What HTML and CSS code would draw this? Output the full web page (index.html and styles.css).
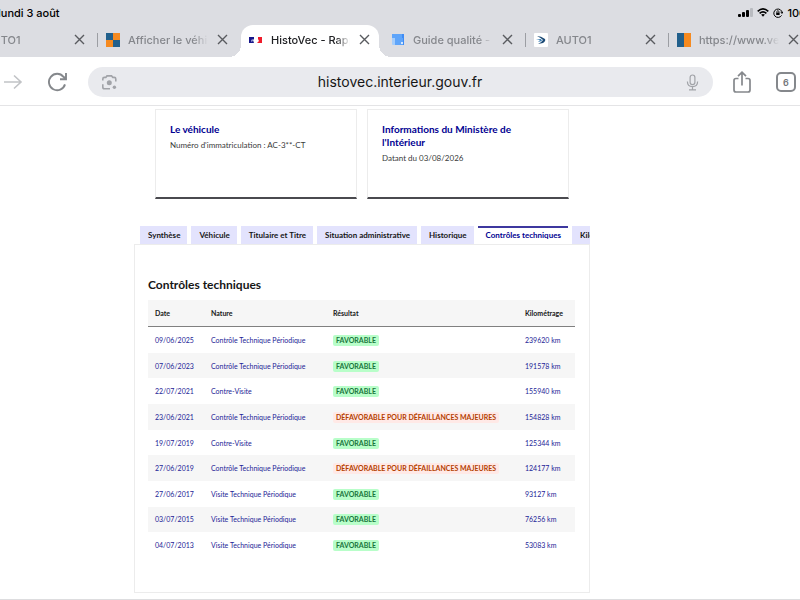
FILE: index.html
```html
<!DOCTYPE html>
<html lang="fr">
  <head>
    <meta charset="UTF-8">
    <title>HistoVec - Rapport</title>
    <link rel="stylesheet" href="styles.css">
  </head>
  <body>
    <div class="browser">
      <div class="status-bar">
        <span class="status-date">lundi 3 août</span>
        <div class="status-icons">
          <svg width="15" height="10" viewBox="0 0 15 10">
            <rect x="0" y="6" width="3" height="3" rx="1"/>
            <rect x="4" y="4" width="3" height="5" rx="1"/>
            <rect x="8" y="2" width="3" height="7" rx="1"/>
            <rect x="12" y="0" width="3" height="9" rx="1" fill="#b9bbc0"/>
          </svg>
          <svg width="12" height="9" viewBox="0 0 12 9" fill="none" stroke="#000" stroke-width="1.7">
            <path d="M.7 3.3Q6-1.4 11.3 3.3M2.6 5.3Q6 2.4 9.4 5.3"/>
            <path d="M4.1 6.6Q6 5.2 7.9 6.6L6 8.7Z" fill="#000" stroke="none"/>
          </svg>
          <svg width="10" height="10" viewBox="0 0 10 10" fill="none" stroke="#000">
            <path d="M8.6 7.4A4.2 4.2 0 1 1 9.2 5M7.6 4.2L9.2 5.4L9.9 3.8"/>
            <rect x="3.2" y="4.6" width="3.4" height="2.4" fill="#000" stroke="none"/>
            <path d="M3.9 4.8V3.7A1 1 0 0 1 5.9 3.7V4.8" stroke-width=".8"/>
          </svg>
          <span class="battery">100 %</span>
        </div>
      </div>

      <div class="tab-strip">
        <div class="browser-tab">
          <span class="favicon"></span>
          <span class="tab-title">AUTO1</span>
          <button class="tab-close" aria-label="Fermer"><svg width="11" height="11" viewBox="0 0 11 11"><path d="M1 1L10 10M10 1L1 10"/></svg></button>
        </div>
        <div class="browser-tab divided">
          <svg class="favicon" viewBox="0 0 14 14"><path fill="#22608c" d="M0 0H7V14H14V7H0Z"/><path fill="#f58a20" d="M7 0H14V7H7V14H0V7H7Z"/></svg>
          <span class="tab-title">Afficher le véhicule</span>
          <button class="tab-close" aria-label="Fermer"><svg width="11" height="11" viewBox="0 0 11 11"><path d="M1 1L10 10M10 1L1 10"/></svg></button>
        </div>
        <div class="browser-tab current">
          <svg class="favicon" viewBox="0 0 14 14"><path fill="#17178b" d="M0 4H5V6L4 7L5 10H0Z"/><path fill="#8d90cc" d="M2 7L4 6V8L2 9Z"/><path fill="#ef1c2b" d="M9 4H13V10H8L10 8L9 6Z"/></svg>
          <span class="tab-title">HistoVec - Rapport</span>
          <button class="tab-close" aria-label="Fermer"><svg width="11" height="11" viewBox="0 0 11 11"><path d="M1 1L10 10M10 1L1 10"/></svg></button>
        </div>
        <div class="browser-tab">
          <svg class="favicon" viewBox="0 0 14 14"><path fill="#3f8cf5" d="M1 1H13V12H4V5H1Z"/><path fill="#5fa5fa" d="M1 1H11V5H1ZM4 5H12V12H4Z"/><path fill="#a5cdfb" d="M1 5H4V12H2Q1 12 1 11Z"/><circle cx="11" cy="10" r="1" fill="#fff"/></svg>
          <span class="tab-title">Guide qualité - AUTO1</span>
          <button class="tab-close" aria-label="Fermer"><svg width="11" height="11" viewBox="0 0 11 11"><path d="M1 1L10 10M10 1L1 10"/></svg></button>
        </div>
        <div class="browser-tab divided">
          <svg class="favicon" viewBox="0 0 14 14"><rect width="14" height="14" rx="1" fill="#fff"/><path fill="#1c4a75" d="M3 3Q7 3 11 6Q12 8 9 10L4 11Q8 9 9 7Q7 5 3 3Z"/><path fill="#3b7fb5" d="M2 6L7 6L8 8L4 9L6 7Z"/></svg>
          <span class="tab-title">AUTO1</span>
          <button class="tab-close" aria-label="Fermer"><svg width="11" height="11" viewBox="0 0 11 11"><path d="M1 1L10 10M10 1L1 10"/></svg></button>
        </div>
        <div class="browser-tab divided">
          <svg class="favicon" viewBox="0 0 14 14"><path fill="#22608c" d="M0 0H7V14H0Z"/><path fill="#f58a20" d="M7 0H14V14H7Z"/></svg>
          <span class="tab-title">https://www.vehicule</span>
          <button class="tab-close" aria-label="Fermer"><svg width="11" height="11" viewBox="0 0 11 11"><path d="M1 1L10 10M10 1L1 10"/></svg></button>
        </div>
      </div>

      <div class="toolbar">
        <button class="tool" aria-label="Suivant">
          <svg width="20" height="16" viewBox="0 0 20 16" fill="none" stroke="#c1c3c6" stroke-width="1.6"><path d="M1 8H18M11 1.5L18 8L11 14.5"/></svg>
        </button>
        <button class="tool" aria-label="Actualiser">
          <svg width="20" height="20" viewBox="0 0 20 20" fill="none" stroke="#85888c" stroke-width="1.9"><path d="M17 12.4A8.2 8.2 0 1 1 15.5 4.8L18 7M18 1V7.2H12"/></svg>
        </button>
        <div class="omnibox">
          <svg width="17" height="17" viewBox="0 0 17 17" fill="none" stroke="#a1a3a8" stroke-width="1.6"><path d="M1.8 6.6V5Q1.8 3.4 3.4 3.4H4.8L6 1.9H10.6L11.8 3.4H13.2Q14.8 3.4 14.8 5V7.5M1.8 10.2V13Q1.8 14.8 3.4 14.8H9"/><circle cx="8.3" cy="8.8" r="2.5" fill="#a1a3a8" stroke="none"/><circle cx="13.4" cy="13.2" r="1.7" fill="#a1a3a8" stroke="none"/></svg>
          <input class="address" type="text" aria-label="Adresse" value="histovec.interieur.gouv.fr">
          <svg width="13" height="17" viewBox="0 0 13 17" fill="none" stroke="#a1a3a8" stroke-width="1.2"><rect x="4.1" y="1" width="4.8" height="9.6" rx="2.4"/><path d="M1.4 7.5Q1.4 12.6 6.5 12.6T11.6 7.5M6.5 12.6V15.8M3 15.8H10"/></svg>
        </div>
        <button class="tool" aria-label="Partager">
          <svg width="18" height="22" viewBox="0 0 18 22" fill="none" stroke="#85888c" stroke-width="1.7"><path d="M5.5 7.5H3Q1 7.5 1 9.5V19Q1 21 3 21H15Q17 21 17 19V9.5Q17 7.5 15 7.5H12.5M9 14.5V1.5M5 5.2L9 1.3L13 5.2"/></svg>
        </button>
        <button class="tool tab-count">6</button>
      </div>
    </div>

    <main class="page">
      <div class="cards">
        <div class="card">
          <h3>Le véhicule</h3>
          <p>Numéro d'immatriculation : AC-3**-CT</p>
        </div>
        <div class="card">
          <h3>Informations du Ministère de l'Intérieur</h3>
          <p>Datant du 03/08/2026</p>
        </div>
      </div>

      <div class="report-tabs" role="tablist">
        <button class="report-tab" role="tab">Synthèse</button>
        <button class="report-tab" role="tab">Véhicule</button>
        <button class="report-tab" role="tab">Titulaire et Titre</button>
        <button class="report-tab" role="tab">Situation administrative</button>
        <button class="report-tab" role="tab">Historique</button>
        <button class="report-tab selected" role="tab" aria-selected="true">Contrôles techniques</button>
        <button class="report-tab" role="tab">Kilométrage</button>
      </div>

      <section class="panel" role="tabpanel">
        <h2>Contrôles techniques</h2>
        <table class="controls">
          <thead>
            <tr>
              <th class="col-date">Date</th>
              <th class="col-nature">Nature</th>
              <th class="col-result">Résultat</th>
              <th>Kilométrage</th>
            </tr>
          </thead>
          <tbody>
            <tr><td>09/06/2025</td><td>Contrôle Technique Périodique</td><td><span class="badge success">Favorable</span></td><td>239620 km</td></tr>
            <tr><td>07/06/2023</td><td>Contrôle Technique Périodique</td><td><span class="badge success">Favorable</span></td><td>191578 km</td></tr>
            <tr><td>22/07/2021</td><td>Contre-Visite</td><td><span class="badge success">Favorable</span></td><td>155940 km</td></tr>
            <tr><td>23/06/2021</td><td>Contrôle Technique Périodique</td><td><span class="badge warning">Défavorable pour défaillances majeures</span></td><td>154828 km</td></tr>
            <tr><td>19/07/2019</td><td>Contre-Visite</td><td><span class="badge success">Favorable</span></td><td>125344 km</td></tr>
            <tr><td>27/06/2019</td><td>Contrôle Technique Périodique</td><td><span class="badge warning">Défavorable pour défaillances majeures</span></td><td>124177 km</td></tr>
            <tr><td>27/06/2017</td><td>Visite Technique Périodique</td><td><span class="badge success">Favorable</span></td><td>93127 km</td></tr>
            <tr><td>03/07/2015</td><td>Visite Technique Périodique</td><td><span class="badge success">Favorable</span></td><td>76256 km</td></tr>
            <tr><td>04/07/2013</td><td>Visite Technique Périodique</td><td><span class="badge success">Favorable</span></td><td>53083 km</td></tr>
          </tbody>
        </table>
      </section>
    </main>
    <footer class="footer-line"></footer>
  </body>
</html>
```

FILE: styles.css
```css
* {
  box-sizing: border-box;
}

body {
  margin: 0;
  background-color: #fff;
  color: #161616;
  font-family: Lato, "Open Sans", sans-serif;
  overflow: hidden;
}

button {
  padding: 0;
  border: 0;
  background: none;
  font-family: inherit;
}

svg {
  display: block;
  flex: none;
}

/* Browser */
.browser {
  font-family: Inter, sans-serif;
  border-bottom: 1px solid #e4e4e6;
  overflow: hidden;
}

.status-bar {
  display: flex;
  justify-content: space-between;
  align-items: center;
  height: 25px;
  background-color: #dcdde2;
  font-size: 11px;
  font-weight: 500;
  color: #000;
}

.status-date {
  margin-left: -2px;
}

.status-icons {
  display: flex;
  align-items: center;
  gap: 4px;
  margin-right: -20px;
  white-space: nowrap;
}

.tab-strip {
  display: flex;
  height: 32px;
  margin-left: -46px;
  background-color: #dcdde2;
}

.browser-tab {
  position: relative;
  display: flex;
  align-items: center;
  flex: none;
  width: 143px;
  padding: 0 12px 3px 9px;
  color: #85878c;
  font-size: 11px;
  font-weight: 500;
}

.browser-tab.divided::before {
  content: "";
  position: absolute;
  left: 0;
  top: 8px;
  width: 1px;
  height: 14px;
  background-color: #9c9ea3;
}

.favicon {
  width: 14px;
  height: 14px;
  flex: none;
}

.tab-title {
  flex: 1;
  margin: 0 9px 0 8px;
  overflow: hidden;
  white-space: nowrap;
  mask-image: linear-gradient(to right, #000 82%, transparent);
}

.tab-close svg {
  fill: none;
  stroke: #595b5f;
  stroke-width: 1.4;
}

.browser-tab.current {
  width: 138px;
  margin: 0 3px 0 1px;
  padding: 0 9px 3px 8px;
  border-radius: 12px 12px 0 0;
  background-color: #fff;
  color: #202124;
}

.browser-tab.current::before,
.browser-tab.current::after {
  content: "";
  position: absolute;
  bottom: 0;
  width: 12px;
  height: 12px;
}

.browser-tab.current::before {
  right: 100%;
  background: radial-gradient(circle at 0 0, transparent 12px, #fff 12px);
}

.browser-tab.current::after {
  left: 100%;
  background: radial-gradient(circle at 100% 0, transparent 12px, #fff 12px);
}

.toolbar {
  display: flex;
  align-items: center;
  padding: 10px 4px 8px 3px;
}

.toolbar .tool {
  flex: none;
}

.toolbar .tool + .tool {
  margin-left: 25px;
}

.omnibox {
  display: flex;
  align-items: center;
  flex: 1;
  height: 30px;
  margin: 0 20px;
  padding: 0 14px 0 13px;
  border-radius: 15px;
  background-color: #e9eaee;
}

.address {
  flex: 1;
  min-width: 0;
  padding: 0 4px 2px 0;
  border: 0;
  background: none;
  color: #161616;
  font-family: inherit;
  font-size: 14px;
  text-align: center;
}

.toolbar .tab-count {
  width: 20px;
  height: 20px;
  border: 2px solid #85888c;
  border-radius: 5px;
  color: #75787c;
  font-size: 9px;
  font-weight: 600;
}

/* Page content */
.page {
  margin: 3px 210px 0 134px;
}

.cards {
  display: grid;
  grid-template-columns: 1fr 1fr;
  gap: 10px;
  margin: 0 21px 27px;
}

.card {
  min-height: 90px;
  padding: 13px 14px;
  border: 1px solid #ececec;
  border-bottom: 2px solid #4a4a4f;
}

.card h3 {
  margin: 0;
  color: #000091;
  font-size: 10px;
  line-height: 13px;
}

.card p {
  margin: 3px 0 0;
  color: #3a3a3a;
  font-size: 8px;
  line-height: 12px;
}

.report-tabs {
  display: flex;
  gap: 4px;
  padding-left: 6px;
  overflow: hidden;
}

.report-tab {
  flex: none;
  height: 18px;
  padding: 0 7px 0 8px;
  background-color: #e3e3fd;
  color: #161616;
  font-size: 8px;
  font-weight: 700;
}

.report-tab.selected {
  padding-bottom: 2px;
  border-top: 2px solid #3d389f;
  background-color: #fff;
  color: #000091;
}

.panel {
  padding: 32px 14px 34px 13px;
  border: 1px solid #ececec;
}

.panel h2 {
  margin: 0 0 7px;
  font-size: 12px;
  line-height: 16px;
}

.controls {
  width: 100%;
  height: 258px;
  border-collapse: collapse;
  table-layout: fixed;
  font-size: 7px;
  line-height: 12px;
  text-align: left;
}

.col-date {
  width: 56px;
}

.col-nature {
  width: 122px;
}

.col-result {
  width: 192px;
}

.controls th,
.controls td {
  padding: 0 7px;
  white-space: nowrap;
}

.controls thead {
  background-color: #f6f6f6;
  border-bottom: 1px solid #808080;
}

.controls th {
  height: 26px;
}

.controls td {
  color: #1d1d96;
}

.controls tbody tr:nth-child(even) {
  background-color: #f6f6f6;
}

.badge {
  display: inline-block;
  padding: 0 3px;
  border-radius: 2px;
  font-weight: 700;
  line-height: 11px;
  text-transform: uppercase;
}

.success {
  background-color: #b8fec9;
  color: #18753c;
}

.warning {
  background-color: #ffe9e6;
  color: #b34000;
}

.footer-line {
  margin-top: 6px;
  border-top: 1px solid #dddddf;
}
```
